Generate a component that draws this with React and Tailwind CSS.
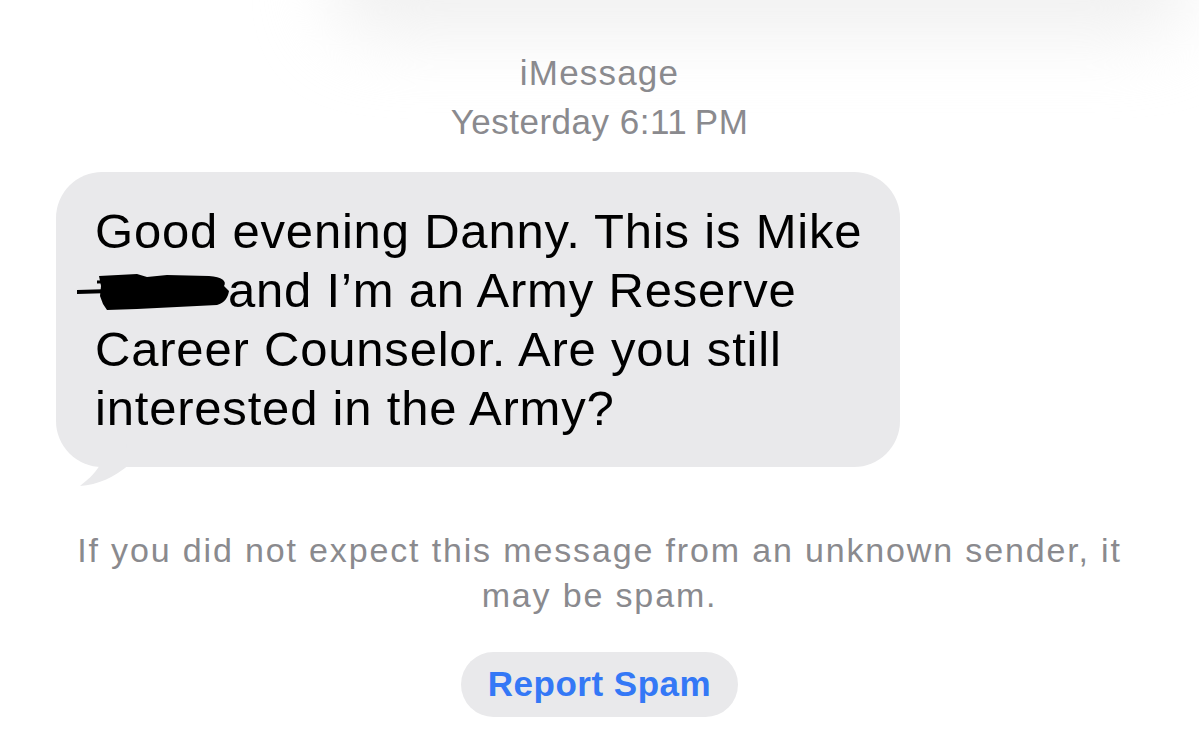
export default function App() {
  return (
    <div
      className="relative w-[1199px] h-[746px] overflow-hidden bg-white"
      style={{ fontFamily: '"Liberation Sans", Arial, sans-serif' }}
    >
      <div className="absolute left-[330px] top-[-70px] w-[860px] h-[105px] rounded-full bg-[#f0f0f0] blur-[35px]" />
      <div className="relative flex flex-col items-center pt-[48px]">
        <div className="text-[35px] leading-[49px] text-[#8a8a8e] tracking-[1.2px]">iMessage</div>
        <div className="text-[35px] leading-[49px] text-[#8a8a8e] tracking-[0.5px]">
          Yesterday 6:11&#8201;PM
        </div>
      </div>
      <div className="relative mt-[26px] ml-[56px] w-[844px] h-[295px] rounded-[46px] bg-[#e9e9eb] pl-[39px] pt-[30px]">
        <svg
          className="absolute left-[18px] top-[255px]"
          width="60"
          height="60"
          viewBox="0 0 60 60"
        >
          <path d="M 0 0 C 4 20, 14 34, 26 38 C 20 48, 12 54, 6 59 C 24 58, 40 50, 55 38 L 50 0 Z" fill="#e9e9eb" />
        </svg>
        <div className="relative text-[49px] leading-[59px] text-black tracking-[0.8px]">
          <div>Good evening Danny. This is Mike</div>
          <div className="relative">
            <span className="inline-block w-[133px]" />
            and I’m an Army Reserve
            <svg
              className="absolute left-[-18px] top-[11px]"
              width="160"
              height="40"
              viewBox="0 0 160 40"
            >
              <path d="M 22 4 L 60 2 L 70 5 L 90 3 L 132 4 C 145 5, 150 9, 147 14 L 152 19 C 151 25, 148 31, 140 33 L 100 35 L 60 37 L 30 38 L 26 32 L 23 24 L 24 14 Z" fill="#000" />
              <path d="M 0 20 L 34 19" stroke="#000" strokeWidth="4" strokeLinecap="round" />
              <path d="M 20 10 L 60 9" stroke="#000" strokeWidth="3" />
            </svg>
          </div>
          <div>Career Counselor. Are you still</div>
          <div>interested in the Army?</div>
        </div>
      </div>
      <div className="relative mt-[61px] text-center text-[34px] leading-[45px] text-[#8a8a8e] tracking-[1.85px]">
        <div>If you did not expect this message from an unknown sender, it</div>
        <div>may be spam.</div>
      </div>
      <div className="relative mt-[34px] flex justify-center">
        <div className="w-[277px] h-[65px] rounded-full bg-[#e9e9eb] flex items-center justify-center text-[35px] font-semibold text-[#3478f6] tracking-[0.5px]">
          Report Spam
        </div>
      </div>
    </div>
  );
}
